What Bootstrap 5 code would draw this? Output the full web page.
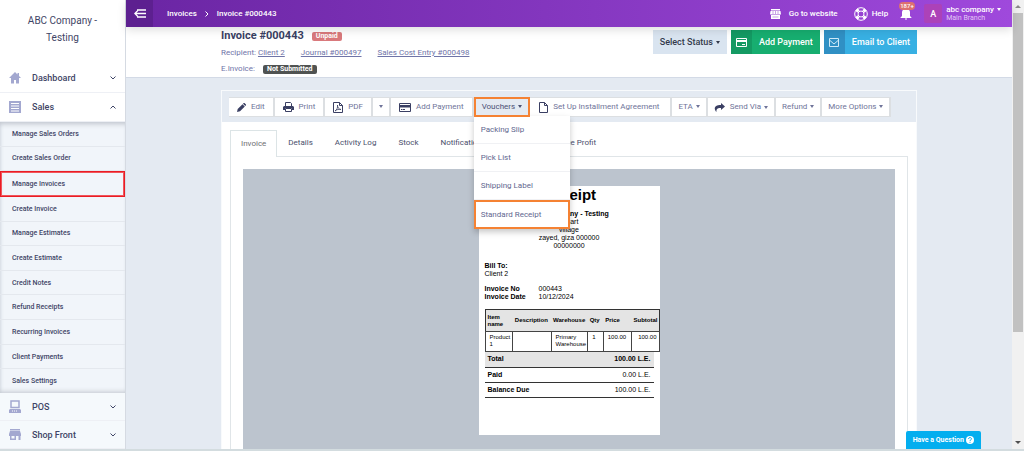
<!DOCTYPE html>
<html lang="en">
<head>
<meta charset="utf-8">
<meta name="viewport" content="width=device-width, initial-scale=1">
<title>Invoice #000443</title>
<link href="https://cdn.jsdelivr.net/npm/bootstrap@5.3.0/dist/css/bootstrap.min.css" rel="stylesheet">
<style>
body{font-family:Roboto,sans-serif;font-size:9px;line-height:12px;color:#3f4566;background:#fff}
a{color:inherit;text-decoration:none}
a:hover{color:inherit}
button{font:inherit}
svg{display:block;flex:none}
.dropdown-toggle::after{border-width:3px 2px 0;border-top-color:currentColor;border-right-color:transparent;border-left-color:transparent;border-style:solid;margin-left:3px;vertical-align:1px}
.app{border-bottom:2px solid #d3dcdf}
.page{min-width:0}
/* sidebar */
.side{width:126px;flex:none;border-right:1px solid #d5dae2;background:#fff}
.brand{height:64px;padding:12px 26px 0;font-size:10px;line-height:17px;text-align:center}
.side-link{height:29px;padding:0 9px;font-weight:500;border-bottom:1px solid #eef0f5}
.side-link svg:first-child{margin-right:11px}
.side-foot{height:28px;background:#f5f9fc}
.submenu{background:#f1f5fa;box-shadow:inset 0 5px 5px -3px #c0c5cd,inset 0 -5px 5px -4px #c0c5cd,inset 4px 0 4px -4px #ccd2da}
.submenu a{padding:0 12px;font-size:7px;font-weight:500;border-bottom:1px solid #e4e8ee}
.submenu a:last-child{border-bottom:0}
.submenu .picked{border:1px solid #ea1c24;outline:1px solid #f0555b;outline-offset:-2px;padding:0 11px}
/* top bar */
.topbar{height:27px;flex:none;background:linear-gradient(90deg,#6a25a3,#9f49dc);color:#fff;font-size:8px;font-weight:500;box-shadow:0 3px 10px rgba(0,0,0,.13);z-index:2;position:relative}
.burger{width:27px;background:#5d2090;border:0;padding:0}
.crumbs{padding-left:14px}
.top-right{padding-right:11px}
.top-item{margin-right:12px}
.avatar{width:18px;height:19px;border-radius:2px;background:#ac42b8;font-size:9px}
.bell-count{position:absolute;left:-1px;top:-5px;border-radius:6px;background:#dd7070;font-size:6px;line-height:8px;padding:0 1px}
.user{line-height:9px;background:none;border:0;color:#fff;padding:0;text-align:left}
.branch{font-size:7px;line-height:9px;font-weight:400;color:#e3c8f5}
/* page head */
.wrap{width:100%;padding:0 95px}
.head{height:51px;flex:none;border-bottom:1px solid #d3dae6}
.facts{padding-top:2px;color:#6f74a8;font-size:8px}
.title{font-size:11px;line-height:14px;font-weight:700;color:#3a3f63;margin:0}
.tag{border-radius:2px;color:#fff;font-weight:700;font-size:7px;line-height:9px;padding:0 4px}
.tag-red{background:#d9797c}
.tag-dark{background:#505352}
.facts a{text-decoration:underline}
.acts{padding-top:3px;gap:4px}
.act{border:0;height:24px;padding:0;color:#fff;font-weight:500;white-space:nowrap}
.act-status{background:#d9e4f0;color:#343a4c;padding:0 7px}
.act-icon{width:21px}
.act-text{padding:0 7px}
.act-green{background:#17ae70}.act-green .act-icon{background:#149a63}
.act-blue{background:#38b0e3}.act-blue .act-icon{background:#3090c4}
/* panel */
.main{background:#e4eaf2}
.panel{border:1px solid #f8fafc;border-bottom:0;background:#fff;margin-top:12px}
.tools{background:#e4eaf2;padding:6px 7px 5px;font-size:8px}
.tools button{height:20px;border:1px solid #dcdfe2;border-width:1px 2px 1px 0;background:#fff;color:#6f7499;padding:0 6px;white-space:nowrap}
.tools .has-icon{padding:0 8px}
.tools .roomy{padding:0 11px 0 9px}
.tools .open{border:2px solid #f58233;background:#e4eaf2;color:#4c5174;position:relative;z-index:4}
.tools svg{color:#3a3f63;margin-right:5px}
.menu-box{position:absolute;left:0;top:19px;width:96px;background:#fff;z-index:3;box-shadow:0 3px 6px rgba(0,0,0,.22)}
.menu-box a{height:28px;padding:0 7px;color:#62678f;border-bottom:1px solid #f0f1f4}
.menu-box .picked{border:2px solid #f58233;height:29px;padding:0 5px}
.tabs{margin:8px 8px 0;border-bottom:1px solid #e0e5e8;font-size:8px}
.tabs button{height:26px;background:#fff;border:0;color:#4a4f6c;padding:0 11px;white-space:nowrap}
.tabs .on{border:1px solid #dce4e6;border-bottom:0;color:#6e6f73;margin-bottom:-1px;height:27px;padding:0 10px}
.tabs .last-tab{margin-left:20px}
.tab-body{margin:0 8px;border:1px solid #e0e5e8;border-width:0 1px;padding:12px 12px 0}
.viewer{background:#bcc4ce}
/* receipt */
.paper{width:181px;min-height:249px;margin-top:17px;background:#fff;color:#000;font-family:"Liberation Sans",sans-serif;font-size:7px;line-height:8px}
.paper h2{font-size:15px;line-height:17px;font-weight:700;margin:0 0 7px}
.paper-body{padding:12px 0 0 6px}
.meta{margin-top:7px}
.meta th{width:54px}
.meta th,.meta td{padding:0}
.items{width:100%;font-size:6px;line-height:7px;border:1px solid #333;table-layout:fixed;margin-top:8px}
.items th{background:#e4e4e4;padding:0 1px 0 2px;height:22px;vertical-align:middle;white-space:nowrap}
.items .name-col{white-space:normal}
.items td{border:1px solid #444;padding:2px 2px 2px 4px;height:20px;vertical-align:top}
.sums{width:169px}
.sums th,.sums td{height:15px;border-bottom:1px solid #333;padding:0 3px;vertical-align:middle}
.sums .grand{background:#e4e4e4}
/* scroll rail and help tab */
.rail{width:12px;flex:none;background:#f1f1f1}
.thumb{width:10px;height:71%;background:#c1c1c1}
.ask{position:absolute;right:31px;bottom:0;height:18px;background:#04aeef;color:#fff;border:0;border-radius:2px 2px 0 0;font-size:7px;font-weight:700;padding:0 7px;gap:2px;z-index:4}
</style>
</head>
<body>
<div class="app d-flex vh-100 overflow-hidden">
  <nav class="side d-flex flex-column">
    <div class="brand">ABC Company - Testing</div>
    <a href="#" class="side-link d-flex align-items-center"><svg width="12" height="12" viewBox="0 0 12 12" fill="#a3a8d0"><path d="M6 0 0 6h2v5.500h3V8h2v3.500h3V6h2L10 4V1H8.500v1.500z"/></svg><span class="flex-grow-1">Dashboard</span><svg width="6" height="4" fill="none" stroke="#3f4566"><path d="m.5.5 2.500 2.500L5.500.5"/></svg></a>
    <a href="#" class="side-link d-flex align-items-center"><svg width="12" height="12"><path fill="#a3a8d0" d="M0 0h12v12H0z"/><path stroke="#fff" d="M2 2.500h8M2 5h8M2 7.500h8M2 10h8"/></svg><span class="flex-grow-1">Sales</span><svg width="6" height="4" fill="none" stroke="#3f4566"><path d="M.5 3.500 3 1l2.500 2.500"/></svg></a>
    <div class="submenu d-flex flex-column flex-grow-1">
      <a href="#" class="d-flex align-items-center flex-fill">Manage Sales Orders</a>
      <a href="#" class="d-flex align-items-center flex-fill">Create Sales Order</a>
      <a href="#" class="picked d-flex align-items-center flex-fill">Manage Invoices</a>
      <a href="#" class="d-flex align-items-center flex-fill">Create Invoice</a>
      <a href="#" class="d-flex align-items-center flex-fill">Manage Estimates</a>
      <a href="#" class="d-flex align-items-center flex-fill">Create Estimate</a>
      <a href="#" class="d-flex align-items-center flex-fill">Credit Notes</a>
      <a href="#" class="d-flex align-items-center flex-fill">Refund Receipts</a>
      <a href="#" class="d-flex align-items-center flex-fill">Recurring Invoices</a>
      <a href="#" class="d-flex align-items-center flex-fill">Client Payments</a>
      <a href="#" class="d-flex align-items-center flex-fill">Sales Settings</a>
    </div>
    <a href="#" class="side-link side-foot d-flex align-items-center"><svg width="12" height="13"><path fill="none" stroke="#a3a8d0" stroke-width="1.500" d="M2 1h8v6.500H2z"/><path fill="#a3a8d0" d="M1 9h10l1 1v3H0v-3z"/><path stroke="#fff" stroke-dasharray="1 1" d="M3 11h6"/></svg><span class="flex-grow-1">POS</span><svg width="6" height="4" fill="none" stroke="#3f4566"><path d="m.5.5 2.500 2.500L5.500.5"/></svg></a>
    <a href="#" class="side-link side-foot d-flex align-items-center"><svg width="12" height="11" fill="#a3a8d0"><path d="M1 0h10v1.500H1zM1 2h10l1 3v2H0V5zM1 6h6v5H1zM9.500 6h2v5h-2z"/><path fill="#f5f9fc" d="M2.500 7h3v2.500h-3z"/></svg><span class="flex-grow-1">Shop Front</span><svg width="6" height="4" fill="none" stroke="#3f4566"><path d="m.5.5 2.500 2.500L5.500.5"/></svg></a>
  </nav>

  <div class="page d-flex flex-column flex-grow-1 position-relative">
    <header class="topbar d-flex align-items-stretch">
      <button class="burger d-flex align-items-center justify-content-center" aria-label="Toggle menu"><svg width="12" height="9" fill="none" stroke="#fff" stroke-width="1.300"><path d="M3 1h9M.8 4.500H12M3 8h9M3.800 1.500l-3 3 3 3"/></svg></button>
      <div class="crumbs d-flex align-items-center flex-grow-1">
        <a href="#">Invoices</a>
        <svg class="mx-2" width="4" height="6" fill="none" stroke="#fff"><path d="m.5.5 2.500 2.500L.5 5.500"/></svg>
        <span>Invoice #000443</span>
      </div>
      <div class="top-right d-flex align-items-center">
        <a href="#" class="d-flex align-items-center me-3"><svg class="me-2" width="11" height="10" fill="#fff"><path d="M1 0h9v1.500H1zM.5 2h10l.5 3.500H0zM1 6h9v4H1z"/><path stroke="#8e3ec9" stroke-width=".5" d="M3 2v3M5.500 2v3M8 2v3M2.500 8h6"/></svg>Go to website</a>
        <a href="#" class="top-item d-flex align-items-center"><svg class="me-1" width="14" height="14" viewBox="0 0 14 14" fill="none" stroke="#fff"><circle cx="7" cy="7" r="6.300"/><circle cx="7" cy="7" r="3"/><g stroke-width="3.200"><path d="m2.500 2.500 2 2M11.500 2.500l-2 2M2.500 11.500l2-2M11.500 11.500l-2-2"/></g></svg>Help</a>
        <a href="#" class="top-item position-relative" aria-label="Notifications"><svg width="12" height="13" fill="#fff"><path d="M2 5c0-4 8-4 8 0v4l1.500 1.500V11H.5v-.5L2 9zM5 11.500h2v1H5z"/></svg><span class="bell-count">187+</span></a>
        <span class="avatar d-flex align-items-center justify-content-center me-1">A</span>
        <div><button class="user dropdown-toggle d-block">abc company</button><div class="branch">Main Branch</div></div>
      </div>
    </header>

    <section class="head bg-white">
      <div class="wrap d-flex justify-content-between">
        <div class="facts text-nowrap">
          <div class="d-flex align-items-center gap-1"><h1 class="title me-1">Invoice #000443</h1><span class="tag tag-red">Unpaid</span></div>
          <div class="d-flex gap-3 pt-1"><span>Recipient: <a href="#">Client 2</a></span><a href="#">Journal #000497</a><a href="#">Sales Cost Entry #000498</a></div>
          <div class="d-flex align-items-center gap-2 pt-1"><span>E.Invoice:</span><span class="tag tag-dark">Not Submitted</span></div>
        </div>
        <div class="acts d-flex">
          <button class="act act-status dropdown-toggle">Select Status</button>
          <button class="act act-green d-flex align-items-stretch"><span class="act-icon d-flex align-items-center justify-content-center"><svg width="11" height="9"><path fill="none" stroke="#fff" d="M.5.5h10v8H.5z"/><path fill="#fff" d="M0 2h11v2H0zM6 6h3v1H6z"/></svg></span><span class="act-text align-self-center">Add Payment</span></button>
          <button class="act act-blue d-flex align-items-stretch"><span class="act-icon d-flex align-items-center justify-content-center"><svg width="10" height="9" fill="none" stroke="#cfeaf8"><path d="M.5.5h9v8h-9zM1 2.500 5 6l4-3.500"/></svg></span><span class="act-text align-self-center">Email to Client</span></button>
        </div>
      </div>
    </section>

    <main class="main flex-grow-1 d-flex overflow-hidden">
      <div class="wrap d-flex flex-column">
        <div class="panel d-flex flex-column flex-grow-1">
          <div class="tools d-flex">
            <button class="has-icon d-flex align-items-center"><svg width="9" height="9" viewBox="0 0 9 9" fill="currentColor"><path d="M0 9l.7-3L5.500 1.200l2.300 2.300L3 8.300zM6 .7 6.700 0h.8L9 1.500v.8l-.7.7z"/></svg>Edit</button>
            <button class="has-icon d-flex align-items-center"><svg width="11" height="10" viewBox="0 0 11 10"><path fill="none" stroke="currentColor" d="M2.500 4V.5h5l1 1V4M2.500 6.500h6v3h-6z"/><path fill="currentColor" d="M1 4h9l1 1v3H9V6H2v2H0V5z"/></svg>Print</button>
            <button class="has-icon d-flex align-items-center"><svg width="10" height="11" fill="none" stroke="currentColor"><path d="M.5.5h6l3 3v7h-9zM6.500.5v3h3"/><path stroke-width=".8" d="M2 9c2-1 3-4 2.500-6C4 5 6 7.500 8 7.500 6 7 3.500 7.500 2 9"/></svg>PDF</button>
            <button class="dropdown-toggle" aria-label="More PDF options"></button>
            <button class="has-icon d-flex align-items-center"><svg width="12" height="9"><path fill="none" stroke="currentColor" d="M.5.5h11v8H.5z"/><path fill="currentColor" d="M0 2h12v2.500H0zM2 6h1.500v1H2zM4 6h2v1H4z"/></svg>Add Payment</button>
            <div class="position-relative">
              <button class="open dropdown-toggle">Vouchers</button>
              <div class="menu-box">
                <a href="#" class="d-flex align-items-center">Packing Slip</a>
                <a href="#" class="d-flex align-items-center">Pick List</a>
                <a href="#" class="d-flex align-items-center">Shipping Label</a>
                <a href="#" class="picked d-flex align-items-center">Standard Receipt</a>
              </div>
            </div>
            <button class="roomy d-flex align-items-center"><svg width="9" height="11" fill="none" stroke="currentColor"><path d="M.5.5h5l3 3v7h-8zM5.500.5v3h3"/></svg>Set Up Installment Agreement</button>
            <button class="dropdown-toggle">ETA</button>
            <button class="dropdown-toggle d-flex align-items-center"><svg width="11" height="9" fill="currentColor"><path d="M7 0l4 3.500L7 7V5C4 5 2 5.500 2.500 9-.5 6 0 2 7 2z"/></svg>Send Via</button>
            <button class="dropdown-toggle">Refund</button>
            <button class="dropdown-toggle">More Options</button>
          </div>
          <div class="tabs d-flex">
            <button class="on">Invoice</button><button>Details</button><button>Activity Log</button><button>Stock</button><button>Notifications</button><button class="last-tab">Sales Invoice Profit</button>
          </div>
          <div class="tab-body flex-grow-1 d-flex">
            <div class="viewer flex-grow-1 d-flex justify-content-center align-items-start">
              <article class="paper">
                <div class="text-center"><h2>Receipt</h2><b>ABC Company - Testing</b><br>Smart<br>village<br>zayed, giza 000000<br>00000000</div>
                <div class="paper-body">
                  <div><b>Bill To:</b><br>Client 2</div>
                  <table class="meta">
                    <tr><th>Invoice No</th><td>000443</td></tr>
                    <tr><th>Invoice Date</th><td>10/12/2024</td></tr>
                  </table>
                  <table class="items">
                    <colgroup><col style="width:16%"><col style="width:22%"><col style="width:21%"><col style="width:9%"><col style="width:16%"><col style="width:16%"></colgroup>
                    <thead><tr><th class="name-col">Item name</th><th>Description</th><th>Warehouse</th><th>Qty</th><th>Price</th><th class="text-end">Subtotal</th></tr></thead>
                    <tbody><tr><td>Product 1</td><td></td><td>Primary Warehouse</td><td>1</td><td>100.00</td><td class="text-end">100.00</td></tr></tbody>
                  </table>
                  <table class="sums">
                    <tr class="grand"><th>Total</th><td class="text-end fw-bold">100.00 L.E.</td></tr>
                    <tr><th>Paid</th><td class="text-end">0.00 L.E.</td></tr>
                    <tr><th>Balance Due</th><td class="text-end">100.00 L.E.</td></tr>
                  </table>
                </div>
              </article>
            </div>
          </div>
        </div>
      </div>
    </main>
    <button class="ask d-flex align-items-center">Have a Question <svg width="8" height="8" viewBox="0 0 8 8"><circle cx="4" cy="4" r="4" fill="#fff"/><path fill="none" stroke="#04aeef" d="M2.500 3c0-2 3-1.700 3-.2C5.500 4 4 3.700 4 5M4 5.800v1"/></svg></button>
  </div>
  <div class="rail d-flex flex-column align-items-center">
    <svg class="my-1" width="6" height="5" fill="#8a8a8a"><path d="M0 4h6L3 1z"/></svg>
    <div class="thumb"></div>
    <svg class="mt-auto mb-1" width="6" height="5" fill="#505050"><path d="M0 1h6L3 4z"/></svg>
  </div>
</div>
<script src="https://cdn.jsdelivr.net/npm/bootstrap@5.3.0/dist/js/bootstrap.bundle.min.js"></script>
</body>
</html>
